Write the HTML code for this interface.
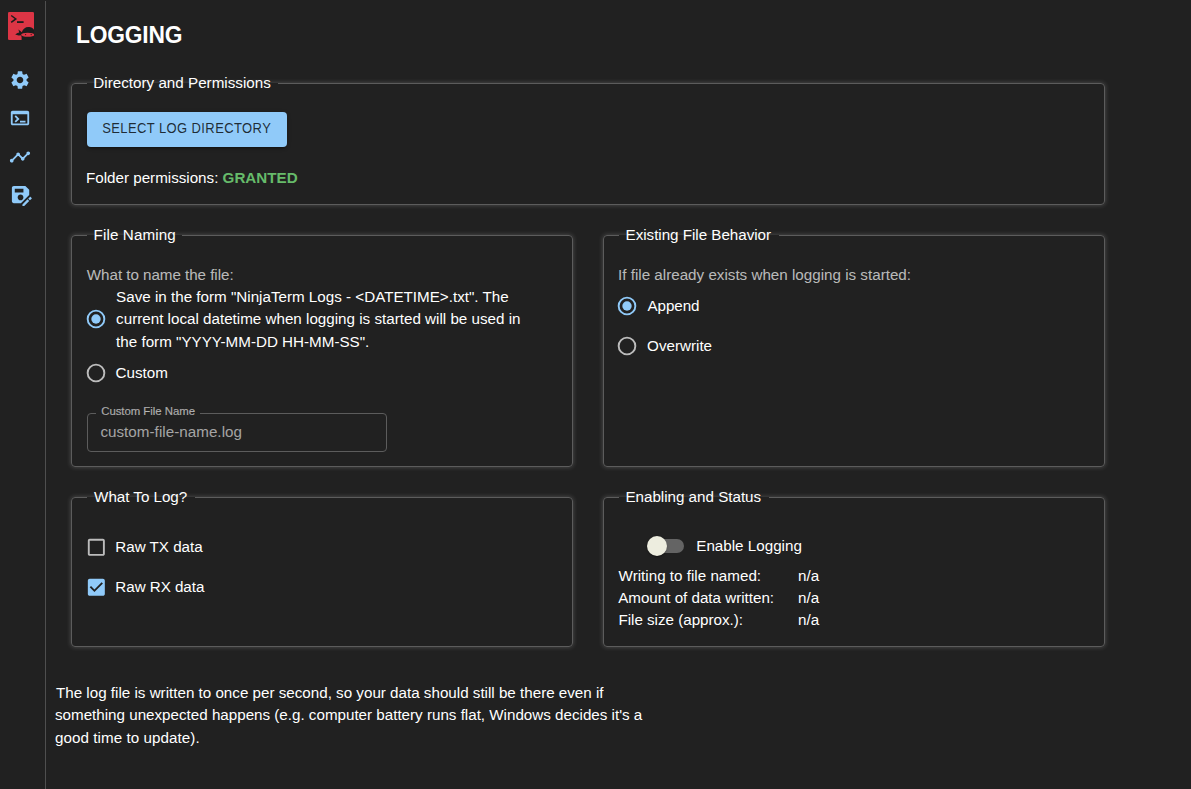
<!DOCTYPE html>
<html>
<head>
<meta charset="utf-8">
<style>
html,body{margin:0;padding:0;}
body{width:1191px;height:789px;overflow:hidden;background:#212121;position:relative;font-family:"Liberation Sans",sans-serif;color:#fff;}
.t{position:absolute;white-space:pre;}
.box{position:absolute;border:1px solid #5c5c5c;border-radius:4px;box-sizing:border-box;box-shadow:0 0 5px rgba(255,255,255,0.22);}
.lg{position:absolute;height:1px;background:#212121;}
svg{position:absolute;display:block;}
.g{color:#66bb6a}
</style>
</head>
<body>
<div style="position:absolute;left:45px;top:1px;width:1px;height:788px;background:#4f4f4f"></div>
<svg style="left:8px;top:12px" width="26" height="28" viewBox="0 0 26 28">
<rect x="0" y="0" width="26" height="28" rx="1.3" fill="#dc3545"/>
<path d="M3.2 3.5 L7.8 6.9 L3.2 10.3" fill="none" stroke="#1c1c1c" stroke-width="1.5"/>
<rect x="9" y="9.2" width="6.6" height="1.8" fill="#1c1c1c"/>
<path d="M13.6 28 L13.6 25.5 C13.2 24 13.2 22 13.8 20.3 C14.8 17 17.3 15 20.3 15 C23.3 15 26 16.6 26 18 L26 28 Z" fill="#1c1c1c"/>
<path d="M14.5 20.8 L10.4 17.6 L11.2 20.6 L9.4 21 L7.2 22.6 L10.6 23.4 L14.5 23.2 Z" fill="#1c1c1c"/>
<ellipse cx="19.7" cy="22.75" rx="6.6" ry="2.1" fill="#dc3545"/>
<circle cx="17.6" cy="22.6" r="0.65" fill="#3a1418"/>
<circle cx="23.2" cy="22.6" r="0.65" fill="#3a1418"/>
</svg>
<svg style="left:9px;top:69px" width="22" height="22" viewBox="0 0 24 24" fill="#90caf9"><path d="M19.14 12.94c.04-.3.06-.61.06-.94 0-.32-.02-.64-.07-.94l2.03-1.58c.18-.14.23-.41.12-.61l-1.920-3.32c-.12-.22-.37-.29-.59-.22l-2.39.96c-.5-.38-1.03-.7-1.62-.94l-.36-2.54c-.04-.24-.24-.41-.48-.41h-3.84c-.24 0-.43.17-.47.41l-.36 2.54c-.59.24-1.13.57-1.62.94l-2.39-.96c-.22-.08-.47 0-.59.22L2.74 8.87c-.12.21-.08.47.12.61l2.03 1.58c-.05.3-.09.63-.09.94s.02.64.07.94l-2.03 1.58c-.18.14-.23.41-.12.61l1.92 3.32c.12.22.37.29.59.22l2.39-.96c.5.38 1.03.7 1.62.94l.36 2.54c.05.24.24.41.48.41h3.84c.24 0 .44-.17.47-.41l.36-2.54c.59-.24 1.13-.56 1.62-.94l2.39.96c.22.08.47 0 .59-.22l1.92-3.32c.12-.22.07-.47-.12-.61l-2.01-1.58zM12 15.6c-1.98 0-3.6-1.62-3.6-3.6s1.62-3.6 3.6-3.6 3.6 1.62 3.6 3.6-1.62 3.6-3.6 3.6z"/></svg>
<svg style="left:9px;top:107.3px" width="22" height="22" viewBox="0 0 24 24" fill="#90caf9"><path d="M20 4H4c-1.11 0-2 .9-2 2v12c0 1.1.89 2 2 2h16c1.1 0 2-.9 2-2V6c0-1.1-.89-2-2-2zm0 14H4V8h16v10zm-2-1h-6v-2h6v2zM7.5 17l-1.41-1.41L8.67 13l-2.590-2.59L7.5 9l4 4-4 4z"/></svg>
<svg style="left:9.2px;top:146px" width="22" height="22" viewBox="0 0 24 24" fill="#90caf9"><path d="M23 8c0 1.1-.9 2-2 2-.18 0-.35-.02-.51-.07l-3.56 3.55c.05.16.07.34.07.52 0 1.1-.9 2-2 2s-2-.9-2-2c0-.18.02-.36.07-.52l-2.55-2.55c-.16.05-.34.07-.52.07s-.36-.02-.52-.07l-4.55 4.56c.05.16.07.33.07.51 0 1.1-.9 2-2 2s-2-.9-2-2 .9-2 2-2c.18 0 .35.02.51.07l4.56-4.55C8.02 9.36 8 9.18 8 9c0-1.1.9-2 2-2s2 .9 2 2c0 .18-.02.36-.07.52l2.55 2.55c.16-.05.34-.07.52-.07s.36.02.52.07l3.55-3.56C19.02 8.35 19 8.18 19 8c0-1.1.9-2 2-2s2 .9 2 2z"/></svg>
<svg style="left:8.56px;top:183.3px" width="23.1" height="23.1" viewBox="0 0 24 24" fill="#90caf9"><path d="M21 12.4V7l-4-4H5c-1.11 0-2 .9-2 2v14c0 1.1.89 2 2 2h7.4l8.6-8.6zM15 15c0 1.66-1.34 3-3 3s-3-1.34-3-3 1.34-3 3-3 3 1.34 3 3zM6 6h9v4H6V6zm13.99 10.25 1.77-1.77c.2-.2.51-.2.71 0l1.06 1.060c.2.2.2.51 0 .71l-1.77 1.77-1.77-1.77zM19.25 17l-5.3 5.3V24h1.77l5.3-5.3-1.77-1.77z"/></svg>
<div class="box" style="left:71px;top:83px;width:1034px;height:122px"></div>
<div class="lg" style="left:87px;top:83px;width:191px"></div>
<div style="position:absolute;left:87px;top:112px;width:200px;height:35px;background:#90caf9;border-radius:4px;box-shadow:0 3px 1px -2px rgba(0,0,0,0.2),0 2px 2px 0 rgba(0,0,0,0.14),0 1px 5px 0 rgba(0,0,0,0.12)"></div>
<div class="box" style="left:71px;top:235px;width:502px;height:232px"></div>
<div class="lg" style="left:87px;top:235px;width:95.30000000000001px"></div>
<svg style="left:85.2px;top:308.2px" width="22" height="22" viewBox="0 0 22 22"><circle cx="11" cy="11" r="8.35" fill="none" stroke="#90caf9" stroke-width="1.9"/><circle cx="11" cy="11" r="4.7" fill="#90caf9"/></svg>
<svg style="left:85.1px;top:362.1px" width="22" height="22" viewBox="0 0 22 22"><circle cx="11" cy="11" r="8.35" fill="none" stroke="rgba(255,255,255,0.7)" stroke-width="1.9"/></svg>
<div class="box" style="left:87px;top:413px;width:300px;height:39px;box-shadow:none;border-color:#5c5c5c"></div>
<div class="lg" style="left:96px;top:413px;width:104px"></div>
<div class="box" style="left:603px;top:235px;width:502px;height:232px"></div>
<div class="lg" style="left:619px;top:235px;width:160.29999999999995px"></div>
<svg style="left:616.1px;top:295.2px" width="22" height="22" viewBox="0 0 22 22"><circle cx="11" cy="11" r="8.35" fill="none" stroke="#90caf9" stroke-width="1.9"/><circle cx="11" cy="11" r="4.7" fill="#90caf9"/></svg>
<svg style="left:616.1px;top:335.1px" width="22" height="22" viewBox="0 0 22 22"><circle cx="11" cy="11" r="8.35" fill="none" stroke="rgba(255,255,255,0.7)" stroke-width="1.9"/></svg>
<div class="box" style="left:71px;top:497px;width:502px;height:150px"></div>
<div class="lg" style="left:87px;top:497px;width:108.4px"></div>
<svg style="left:84.87px;top:535.87px" width="22.67" height="22.67" viewBox="0 0 24 24" fill="rgba(255,255,255,0.7)"><path d="M19 5v14H5V5h14m0-2H5c-1.11 0-2 .9-2 2v14c0 1.1.89 2 2 2h14c1.1 0 2-.9 2-2V5c0-1.1-.89-2-2-2z"/></svg>
<svg style="left:84.87px;top:575.77px" width="22.67" height="22.67" viewBox="0 0 24 24" fill="#90caf9"><path d="M19 3H5c-1.11 0-2 .9-2 2v14c0 1.1.89 2 2 2h14c1.1 0 2-.9 2-2V5c0-1.1-.89-2-2-2zm-9 14l-5-5 1.41-1.41L10 14.17l7.59-7.59L19 8l-9 9z"/></svg>
<div class="box" style="left:603px;top:497px;width:502px;height:150px"></div>
<div class="lg" style="left:619px;top:497px;width:150.29999999999995px"></div>
<div style="position:absolute;left:650px;top:539px;width:34px;height:14px;border-radius:7px;background:rgba(255,255,255,0.3)"></div>
<div style="position:absolute;left:647px;top:536px;width:20px;height:20px;border-radius:10px;background:#ededdf;box-shadow:0 2px 1px -1px rgba(0,0,0,0.2),0 1px 1px 0 rgba(0,0,0,0.14),0 1px 3px 0 rgba(0,0,0,0.12)"></div>
<div class="t" style="left:75.9px;top:20.0px;font-size:22.8px;line-height:30px;font-weight:700;letter-spacing:-0.183px;transform:scaleY(1.045);transform-origin:0 23px;">LOGGING</div>
<div class="t" style="left:93.3px;top:72.0px;font-size:15.2px;line-height:22px;letter-spacing:0.013px;">Directory and Permissions</div>
<div class="t" style="left:102.2px;top:118.9px;font-size:13px;line-height:20px;letter-spacing:0.396px;color:rgba(0,0,0,0.8);transform:scaleY(1.07);transform-origin:0 14px;">SELECT LOG DIRECTORY</div>
<div class="t" style="left:86.0px;top:166.9px;font-size:15.2px;line-height:22px;letter-spacing:-0.008px;">Folder permissions: <b class="g">GRANTED</b></div>
<div class="t" style="left:93.6px;top:223.9px;font-size:15.2px;line-height:22px;letter-spacing:0.11px;">File Naming</div>
<div class="t" style="left:86.8px;top:263.9px;font-size:15.2px;line-height:22px;color:rgba(255,255,255,0.7);letter-spacing:-0.043px;">What to name the file:</div>
<div class="t" style="left:116.1px;top:285.65px;font-size:15.2px;line-height:22.45px;">Save in the form "NinjaTerm Logs - &lt;DATETIME&gt;.txt". The
current local datetime when logging is started will be used in
the form "YYYY-MM-DD HH-MM-SS".</div>
<div class="t" style="left:115.5px;top:361.8px;font-size:15.2px;line-height:22px;">Custom</div>
<div class="t" style="left:101.2px;top:403.9px;font-size:11.4px;line-height:14px;-webkit-text-stroke:0.2px rgba(255,255,255,0.5);color:rgba(255,255,255,0.58);letter-spacing:-0.033px;">Custom File Name</div>
<div class="t" style="left:100.4px;top:420.6px;font-size:15.2px;line-height:22px;color:rgba(255,255,255,0.6);letter-spacing:0.032px;">custom-file-name.log</div>
<div class="t" style="left:625.6px;top:224.0px;font-size:15.2px;line-height:22px;letter-spacing:-0.029px;">Existing File Behavior</div>
<div class="t" style="left:618.05px;top:263.9px;font-size:15.2px;line-height:22px;color:rgba(255,255,255,0.7);letter-spacing:0.001px;">If file already exists when logging is started:</div>
<div class="t" style="left:647.6px;top:294.8px;font-size:15.2px;line-height:22px;letter-spacing:-0.1px;">Append</div>
<div class="t" style="left:647.1px;top:335.0px;font-size:15.2px;line-height:22px;letter-spacing:0.0px;">Overwrite</div>
<div class="t" style="left:94.1px;top:485.6px;font-size:15.2px;line-height:22px;letter-spacing:-0.027px;">What To Log?</div>
<div class="t" style="left:115.3px;top:536.0px;font-size:15.2px;line-height:22px;letter-spacing:-0.01px;">Raw TX data</div>
<div class="t" style="left:115.3px;top:576.1px;font-size:15.2px;line-height:22px;letter-spacing:-0.04px;">Raw RX data</div>
<div class="t" style="left:625.4px;top:485.8px;font-size:15.2px;line-height:22px;letter-spacing:-0.011px;">Enabling and Status</div>
<div class="t" style="left:696.25px;top:535.0px;font-size:15.2px;line-height:22px;letter-spacing:0.004px;">Enable Logging</div>
<div class="t" style="left:618.6px;top:564.8px;font-size:15.2px;line-height:22px;letter-spacing:0.005px;">Writing to file named:</div>
<div class="t" style="left:618.2px;top:586.9px;font-size:15.2px;line-height:22px;letter-spacing:-0.014px;">Amount of data written:</div>
<div class="t" style="left:618.4px;top:608.8px;font-size:15.2px;line-height:22px;letter-spacing:-0.011px;">File size (approx.):</div>
<div class="t" style="left:798.05px;top:564.8px;font-size:15.2px;line-height:22px;">n/a</div>
<div class="t" style="left:798.05px;top:586.9px;font-size:15.2px;line-height:22px;">n/a</div>
<div class="t" style="left:798.05px;top:608.7px;font-size:15.2px;line-height:22px;">n/a</div>
<div class="t" style="left:56.0px;top:682.2px;font-size:15.2px;line-height:22px;letter-spacing:-0.004px;">The log file is written to once per second, so your data should still be there even if</div>
<div class="t" style="left:55.0px;top:703.9px;font-size:15.2px;line-height:22px;letter-spacing:-0.008px;">something unexpected happens (e.g. computer battery runs flat, Windows decides it's a</div>
<div class="t" style="left:55.0px;top:726.7px;font-size:15.2px;line-height:22px;letter-spacing:0.055px;">good time to update).</div>
</body>
</html>
